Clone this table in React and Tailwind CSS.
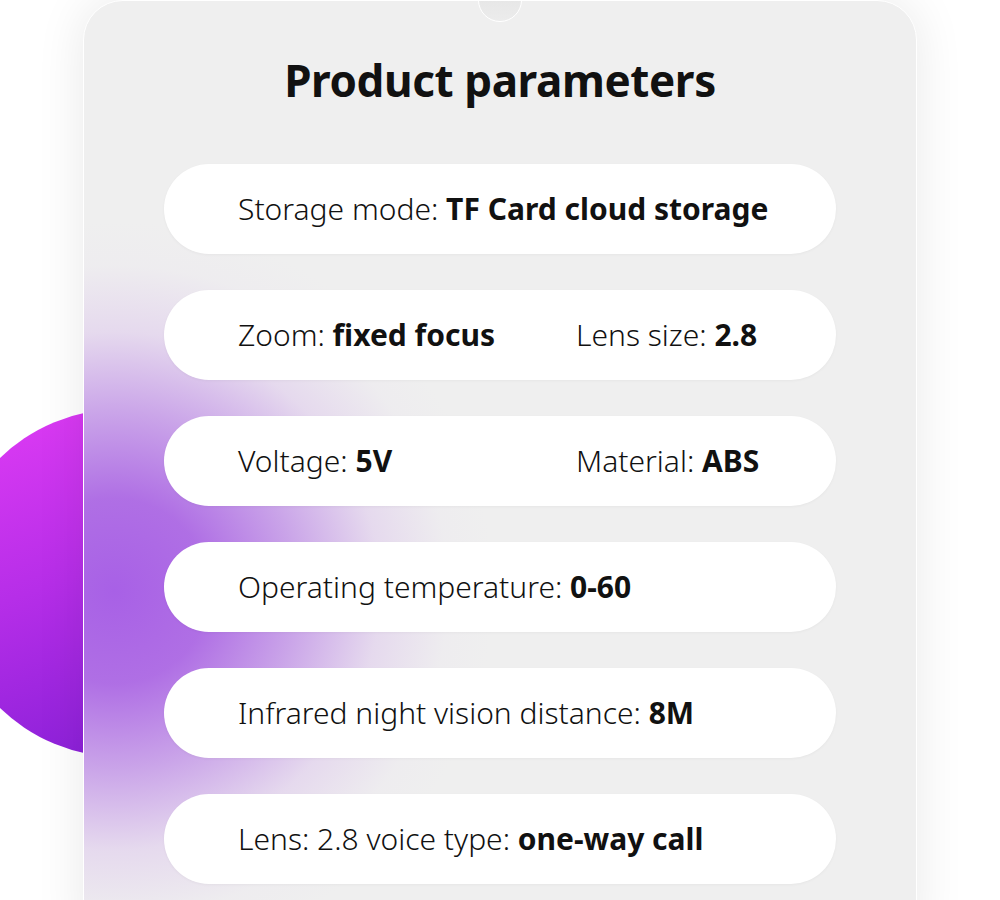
import React from "react";

const rows = [
  [["Storage mode: ", "TF Card cloud storage"]],
  [["Zoom: ", "fixed focus"], ["Lens size: ", "2.8"]],
  [["Voltage: ", "5V"], ["Material: ", "ABS"]],
  [["Operating temperature: ", "0-60"]],
  [["Infrared night vision distance: ", "8M"]],
  [["Lens: 2.8 voice type: ", "one-way call"]],
];

function Item({ label, value }) {
  return (
    <span className="whitespace-nowrap">
      <span className="font-light">{label}</span>
      <span className="font-bold">{value}</span>
    </span>
  );
}

export default function App() {
  return (
    <div
      className="relative w-[1000px] h-[900px] overflow-hidden bg-white text-[#111]"
      style={{ fontFamily: '"Noto Sans", "Open Sans", sans-serif' }}
    >
      {/* purple circle behind card */}
      <div className="absolute left-[-53px] top-[409px] w-[348px] h-[348px] rounded-full bg-[linear-gradient(160deg,#e23cf5_0%,#b62ee8_45%,#7a1bd2_100%)]" />

      <div className="relative ml-[83px] w-[834px] h-[940px] rounded-t-[40px] bg-[#efefef] border border-white shadow-[0_0_50px_rgba(0,0,0,0.09)] overflow-hidden">
        {/* purple glow */}
        <div className="absolute left-[-350px] top-[220px] w-[760px] h-[740px] rounded-full bg-[radial-gradient(closest-side,rgba(168,96,230,1)_0%,rgba(172,104,228,0.95)_25%,rgba(186,132,230,0.7)_48%,rgba(215,185,236,0.4)_70%,rgba(232,222,240,0.15)_88%,rgba(239,239,239,0)_100%)]" />

        {/* notch */}
        <div className="absolute left-[394px] top-[-23px] w-[44px] h-[44px] rounded-full border border-white bg-[linear-gradient(180deg,#e2e2e2,#ececec)]" />

        <div className="relative flex flex-col items-center">
          <h1 className="pt-[57px] text-[44px] leading-none font-bold tracking-[-0.4px]">
            Product parameters
          </h1>
          <div className="mt-[62px] flex flex-col gap-[36px]">
            {rows.map((r, i) => (
              <div
                key={i}
                className="w-[672px] h-[90px] rounded-full bg-white pl-[74px] flex items-center text-[30px] leading-none shadow-[0_1px_3px_rgba(0,0,0,0.04)]"
              >
                {r.length === 1 ? (
                  <Item label={r[0][0]} value={r[0][1]} />
                ) : (
                  <div className="grid grid-cols-[338px_auto]">
                    <Item label={r[0][0]} value={r[0][1]} />
                    <Item label={r[1][0]} value={r[1][1]} />
                  </div>
                )}
              </div>
            ))}
          </div>
        </div>
      </div>
    </div>
  );
}
